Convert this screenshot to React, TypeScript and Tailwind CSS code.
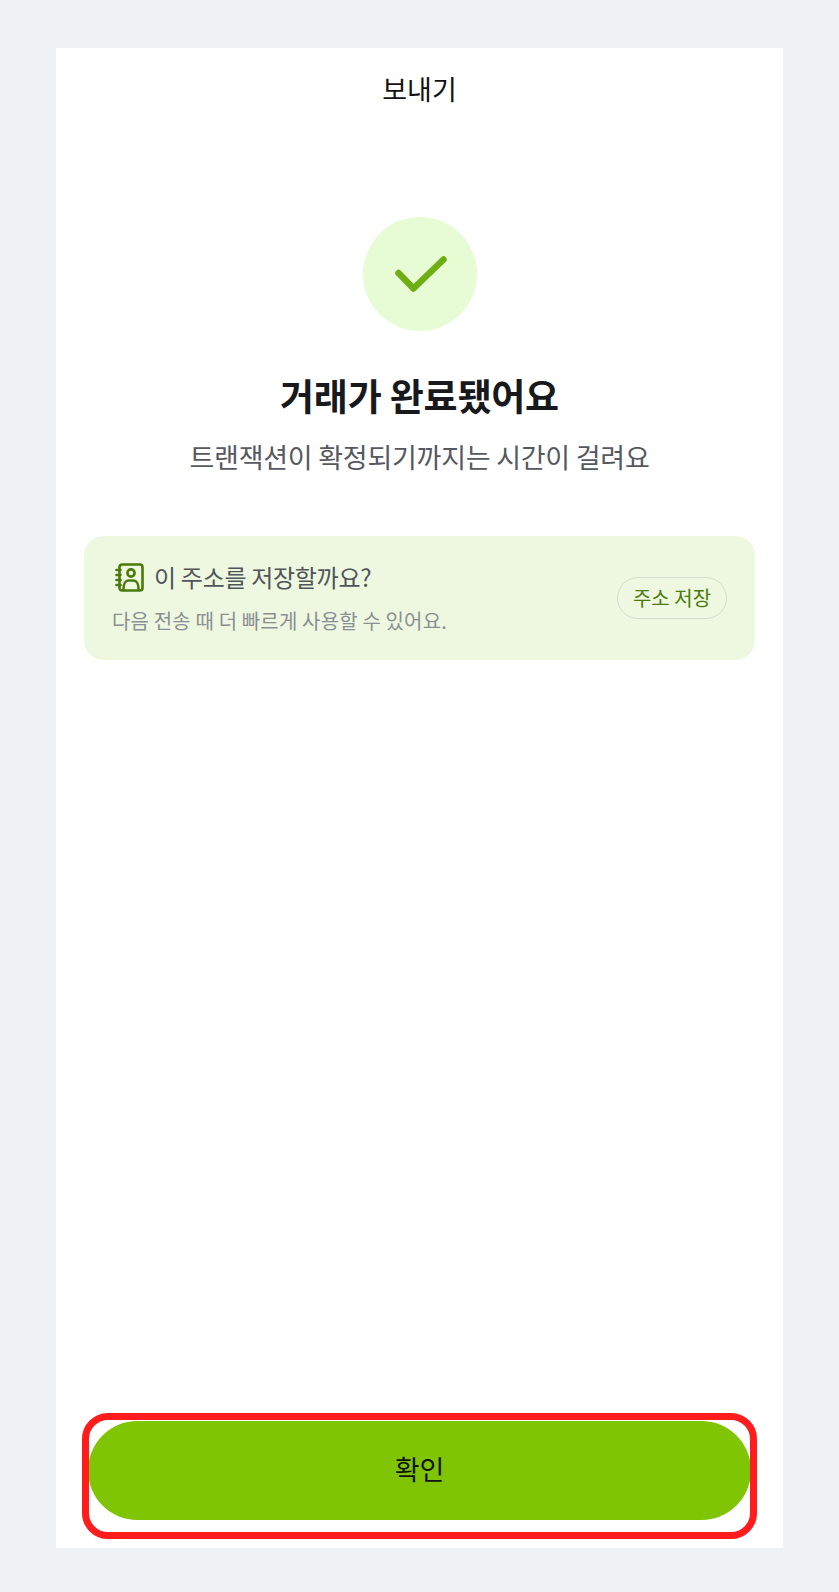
import React from 'react';

const font = { fontFamily: '"Noto Sans CJK KR", "Noto Sans", sans-serif' };

function ContactBookIcon() {
  return (
    <svg width="29" height="29" viewBox="0 0 29 29" fill="none" stroke="#4a7a08" strokeWidth="2.6" strokeLinecap="round" strokeLinejoin="round">
      <rect x="4.500" y="1.500" width="23" height="26" rx="2.500" />
      <path d="M1.500 7h4M1.500 12h4M1.500 17h4M1.500 22h4" />
      <circle cx="16" cy="10" r="3.600" />
      <path d="M8.500 26c0-5 2-8.500 5-8.500h5c3 0 5 3.500 5 8.500" />
    </svg>
  );
}

export default function App() {
  return (
    <div className="w-[839px] h-[1592px] bg-[#f0f1f3] pt-[48px] pl-[56px]" style={font}>
      <div className="w-[727px] h-[1500px] bg-white flex flex-col">
        <h1 className="mt-[21px] h-[40px] text-center text-[27px] leading-[40px] font-normal text-[#111]">보내기</h1>

        <div className="mt-[108px] ml-[307px] w-[114px] h-[114px] rounded-full bg-[#e7fbd5] flex items-center justify-center">
          <svg width="56" height="44" viewBox="0 0 56 44" fill="none" stroke="#6fae12" strokeWidth="6.500" strokeLinecap="round" strokeLinejoin="round">
            <path d="M6.500 21l15 15.500L51.500 7.500" />
          </svg>
        </div>

        <h2 className="mt-[38px] text-center text-[37px] leading-[52px] font-semibold text-[#17191c] tracking-[-0.2px]">거래가 완료됐어요</h2>
        <p className="mt-[16px] text-center text-[27px] leading-[40px] text-[#55585f] tracking-[-0.25px]">트랜잭션이 확정되기까지는 시간이 걸려요</p>

        <div className="mt-[59px] mx-[28px] h-[124px] rounded-[20px] bg-[#eef8e0] flex items-center justify-between pl-[28px] pr-[28px]">
          <div>
            <div className="flex items-center gap-[10px] pl-[3px]">
              <ContactBookIcon />
              <span className="text-[24px] leading-[34px] text-[#50555a] tracking-[-0.3px]">이 주소를 저장할까요?</span>
            </div>
            <p className="mt-[12px] text-[20px] leading-[30px] text-[#8a8f94] tracking-[0.15px]">다음 전송 때 더 빠르게 사용할 수 있어요.</p>
          </div>
          <button className="w-[110px] h-[42px] rounded-full border border-[#d5dcd0] text-[20px] leading-[28px] text-[#4a7a08]">주소 저장</button>
        </div>

        <div className="mt-auto mb-[28px] mx-[32px] relative">
          <button className="w-[663px] h-[99px] rounded-[50px] bg-[#80c504] pb-[2px] text-[27px] text-[#111]">확인</button>
          <div className="absolute -left-[6px] -right-[6px] -top-[8px] -bottom-[19px] rounded-[26px] border-[7px] border-[#ff1c1c] pointer-events-none" />
        </div>
      </div>
    </div>
  );
}
